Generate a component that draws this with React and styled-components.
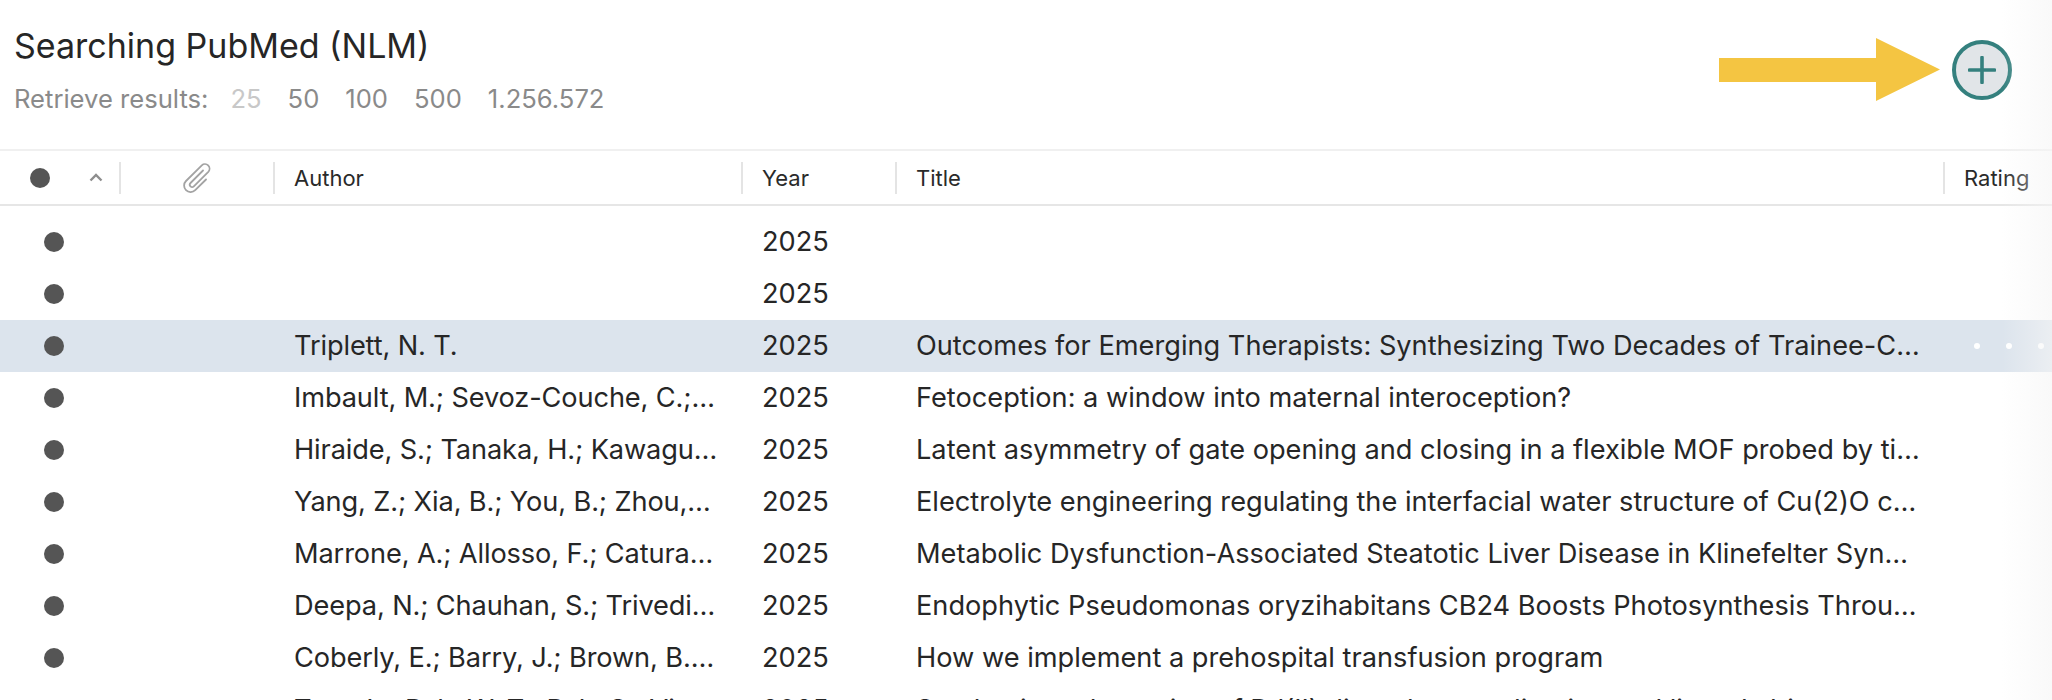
import React from "react";
import styled, { createGlobalStyle } from "styled-components";

const GlobalStyle = createGlobalStyle`
  html, body {
    margin: 0;
    padding: 0;
    background: #fff;
  }
  body {
    font-family: Inter, "Noto Sans", sans-serif;
    color: #262626;
  }
`;

const COLUMNS = "119px 154px 468px 154px 1048px 1fr";

const rows = [
  { year: "2025" },
  { year: "2025" },
  {
    author: "Triplett, N. T.",
    year: "2025",
    title: "Outcomes for Emerging Therapists: Synthesizing Two Decades of Trainee-C…",
    selected: true,
  },
  {
    author: "Imbault, M.; Sevoz-Couche, C.;…",
    year: "2025",
    title: "Fetoception: a window into maternal interoception?",
  },
  {
    author: "Hiraide, S.; Tanaka, H.; Kawagu…",
    year: "2025",
    title: "Latent asymmetry of gate opening and closing in a flexible MOF probed by ti…",
  },
  {
    author: "Yang, Z.; Xia, B.; You, B.; Zhou,…",
    year: "2025",
    title: "Electrolyte engineering regulating the interfacial water structure of Cu(2)O c…",
  },
  {
    author: "Marrone, A.; Allosso, F.; Catura…",
    year: "2025",
    title: "Metabolic Dysfunction-Associated Steatotic Liver Disease in Klinefelter Syn…",
  },
  {
    author: "Deepa, N.; Chauhan, S.; Trivedi…",
    year: "2025",
    title: "Endophytic Pseudomonas oryzihabitans CB24 Boosts Photosynthesis Throu…",
  },
  {
    author: "Coberly, E.; Barry, J.; Brown, B.…",
    year: "2025",
    title: "How we implement a prehospital transfusion program",
  },
  {
    author: "Tran, L.; Pak, W. T.; Pak, S.; Vi…",
    year: "2025",
    title: "Synthesis and reaction of Pd(II) dimer by coordination and ligand-driven…",
  },
];

const App = () => {
  return (
    <Page>
      <GlobalStyle />
      <Toolbar>
        <Heading>
          <Title>Searching PubMed (NLM)</Title>
          <Retrieve>
            <RetrieveLabel>Retrieve results:</RetrieveLabel>
            <Count $muted>25</Count>
            <Count>50</Count>
            <Count>100</Count>
            <Count>500</Count>
            <Count>1.256.572</Count>
          </Retrieve>
        </Heading>
        <Actions>
          <svg width="221" height="64" viewBox="0 0 221 64">
            <path d="M0 20H157V0L221 31.500L157 63V44H0Z" fill="#f4c542" />
          </svg>
          <AddButton>
            <svg width="28" height="28" viewBox="0 0 28 28">
              <path
                d="M14 1.500V26.500M1.500 14H26.500"
                stroke="#34807e"
                strokeWidth="3.600"
                strokeLinecap="round"
              />
            </svg>
          </AddButton>
        </Actions>
      </Toolbar>
      <HeaderRow>
        <SortCell>
          <Dot />
          <svg width="14" height="9" viewBox="0 0 14 9">
            <path d="M1.500 7.500L7 2L12.500 7.500" fill="none" stroke="#8e8e8e" strokeWidth="2.400" />
          </svg>
        </SortCell>
        <HeadCell $center>
          <svg width="30" height="31" viewBox="0 0 30 31">
            <path
              d="M21 8.500L8.500 21a2.300 2.300 0 0 0 3.300 3.300L26.300 9.800a4.600 4.600 0 0 0-6.500-6.500L4 19a6.500 6.500 0 0 0 9.200 9.200L24 17.500"
              fill="none"
              stroke="#a3a3a3"
              strokeWidth="1.800"
              strokeLinecap="round"
            />
          </svg>
        </HeadCell>
        <HeadCell>Author</HeadCell>
        <HeadCell>Year</HeadCell>
        <HeadCell>Title</HeadCell>
        <HeadCell>Rating</HeadCell>
      </HeaderRow>
      <Rows>
        {rows.map((row, i) => (
          <Row key={i} $selected={row.selected}>
            <DotCell>
              <Dot />
            </DotCell>
            <span />
            <AuthorCell>{row.author}</AuthorCell>
            <Cell>{row.year}</Cell>
            <Cell>{row.title}</Cell>
            {row.selected ? (
              <RatingDots>
                <i />
                <i />
                <i />
              </RatingDots>
            ) : (
              <span />
            )}
          </Row>
        ))}
      </Rows>
      <EdgeShade />
    </Page>
  );
};

const Page = styled.div`
  position: relative;
  width: 2052px;
  height: 700px;
  overflow: hidden;
  background: #fff;
`;

const Toolbar = styled.header`
  display: flex;
  justify-content: space-between;
  height: 149px;
  box-sizing: border-box;
  padding: 0 40px 0 14px;
`;

const Heading = styled.div`
  display: flex;
  flex-direction: column;
  padding-top: 25px;
  gap: 17px;
`;

const Title = styled.h1`
  margin: 0;
  font-size: 34px;
  line-height: 42px;
  font-weight: 400;
  color: #262626;
`;

const Retrieve = styled.div`
  display: flex;
  gap: 26px;
  font-size: 25.600px;
  line-height: 30px;
  color: #8a8a8a;
`;

const RetrieveLabel = styled.span`
  margin-right: -4px;
`;

const Count = styled.span`
  color: ${(p) => (p.$muted ? "#c8c8c8" : "#8a8a8a")};
`;

const Actions = styled.div`
  display: flex;
  align-items: center;
  gap: 12px;
  height: 140px;
`;

const AddButton = styled.div`
  display: flex;
  align-items: center;
  justify-content: center;
  width: 60px;
  height: 60px;
  box-sizing: border-box;
  border: 4.500px solid #34807e;
  border-radius: 50%;
  background: #e1e5e8;
`;

const HeaderRow = styled.div`
  display: grid;
  grid-template-columns: ${COLUMNS};
  align-items: center;
  height: 57px;
  box-sizing: border-box;
  border-top: 2px solid #f0f0f0;
  border-bottom: 2px solid #e6e6e6;
`;

const SortCell = styled.div`
  display: flex;
  align-items: center;
  gap: 39px;
  padding-left: 30px;
`;

const HeadCell = styled.div`
  display: flex;
  align-items: center;
  justify-content: ${(p) => (p.$center ? "center" : "flex-start")};
  height: 32px;
  padding-left: ${(p) => (p.$center ? "0" : "19px")};
  border-left: 2px solid #e4e4e4;
  font-size: 22px;
  line-height: 34px;
  color: #2a2a2a;
`;

const Rows = styled.div`
  padding-top: 10px;
`;

const Row = styled.div`
  display: grid;
  grid-template-columns: ${COLUMNS};
  align-items: center;
  height: 52px;
  background: ${(p) => (p.$selected ? "#dce4ed" : "transparent")};
`;

const DotCell = styled.div`
  padding-left: 44px;
`;

const Dot = styled.span`
  display: block;
  width: 20px;
  height: 20px;
  border-radius: 50%;
  background: #555;
`;

const Cell = styled.div`
  padding: 0 0 0 21px;
  font-size: 27.200px;
  line-height: 32px;
  color: #262626;
  white-space: nowrap;
  overflow: hidden;
`;

const AuthorCell = styled(Cell)`
  letter-spacing: -0.120px;
`;

const RatingDots = styled.div`
  display: flex;
  gap: 26px;
  padding-left: 31px;
  & i {
    width: 6px;
    height: 6px;
    border-radius: 50%;
    background: #fff;
  }
`;

const EdgeShade = styled.div`
  position: absolute;
  top: 0;
  right: 0;
  bottom: 0;
  width: 50px;
  background: linear-gradient(to right, rgba(245, 245, 245, 0), rgba(245, 245, 245, 0.6));
  pointer-events: none;
`;

export default App;
